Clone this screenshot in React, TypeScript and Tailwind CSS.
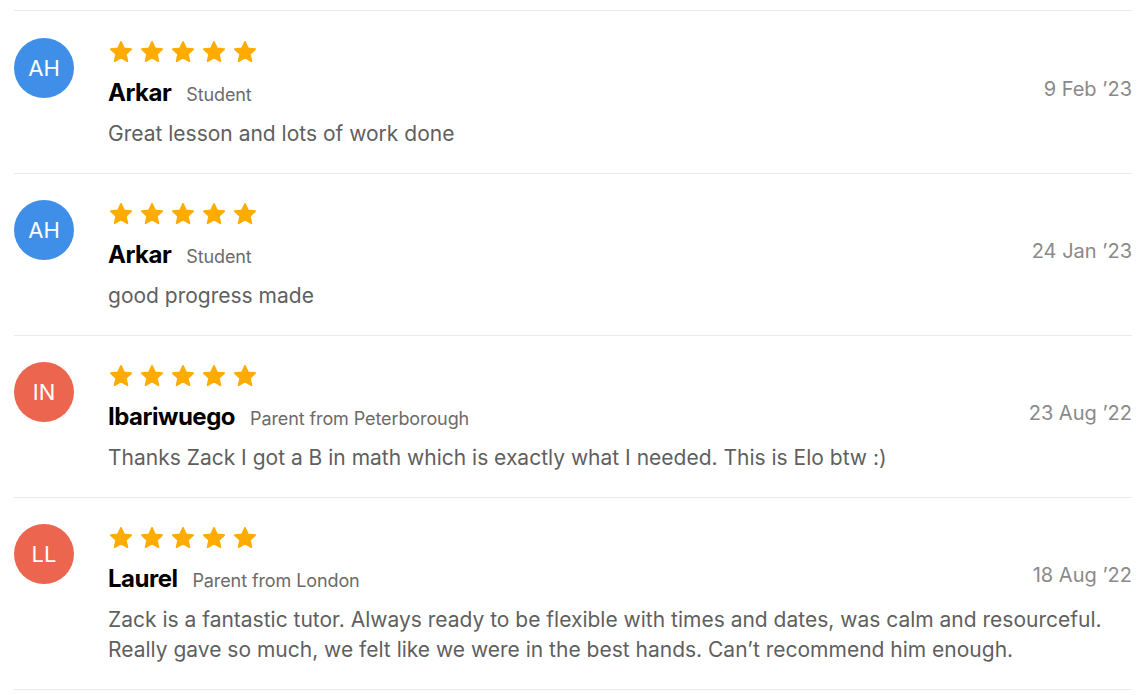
const reviews = [
  {
    initials: "AH",
    color: "bg-[#3f8fe9]",
    name: "Arkar",
    role: "Student",
    date: "9 Feb ’23",
    text: ["Great lesson and lots of work done"],
  },
  {
    initials: "AH",
    color: "bg-[#3f8fe9]",
    name: "Arkar",
    role: "Student",
    date: "24 Jan ’23",
    text: ["good progress made"],
  },
  {
    initials: "IN",
    color: "bg-[#ec654e]",
    name: "Ibariwuego",
    role: "Parent from Peterborough",
    date: "23 Aug ’22",
    text: ["Thanks Zack I got a B in math which is exactly what I needed. This is Elo btw :)"],
  },
  {
    initials: "LL",
    color: "bg-[#ec654e]",
    name: "Laurel",
    role: "Parent from London",
    date: "18 Aug ’22",
    text: [
      "Zack is a fantastic tutor. Always ready to be flexible with times and dates, was calm and resourceful.",
      "Really gave so much, we felt like we were in the best hands. Can’t recommend him enough.",
    ],
  },
];

function Star() {
  return (
    <svg width="26" height="26" viewBox="0 0 24 24" className="shrink-0">
      <path
        d="M12 2.6l2.8 6.1 6.6.7-4.9 4.5 1.4 6.6L12 17.1l-5.9 3.4 1.4-6.6-4.9-4.5 6.6-.7z"
        fill="#ffab00"
        stroke="#ffab00"
        strokeWidth="1.6"
        strokeLinejoin="round"
      />
    </svg>
  );
}

export default function App() {
  return (
    <div className="bg-white min-h-screen pt-[10px] pl-[14px] pr-[16px] font-['Inter',sans-serif]">
      <div className="border-t border-[#ebebeb]">
        {reviews.map((r, i) => (
          <div
            key={i}
            className={`flex gap-[34px] border-b border-[#ebebeb] pb-[24px] ${i === 0 ? "pt-[27px]" : "pt-[26px]"}`}
          >
            <div
              className={`w-[60px] h-[60px] rounded-full ${r.color} text-white flex items-center justify-center text-[22px] shrink-0`}
            >
              {r.initials}
            </div>
            <div className="flex-1 min-w-0">
              <div className="flex gap-[5px] mt-[1px]">
                {[0, 1, 2, 3, 4].map((s) => (
                  <Star key={s} />
                ))}
              </div>
              <div className="flex items-center justify-between h-[34px] mt-[11px]">
                <div className="flex items-baseline gap-[15px]">
                  <span className="text-[24px] font-bold text-black tracking-[-0.5px]">{r.name}</span>
                  <span className="text-[18px] text-[#6b6b6b] tracking-[-0.1px]">{r.role}</span>
                </div>
                <span className="text-[20px] text-[#8a8a8a] mb-[8px]">{r.date}</span>
              </div>
              <div className="mt-[9px] text-[21px] leading-[30px] text-[#5f5f5f]">
                {r.text.map((t, j) => (
                  <div key={j}>{t}</div>
                ))}
              </div>
            </div>
          </div>
        ))}
      </div>
    </div>
  );
}
